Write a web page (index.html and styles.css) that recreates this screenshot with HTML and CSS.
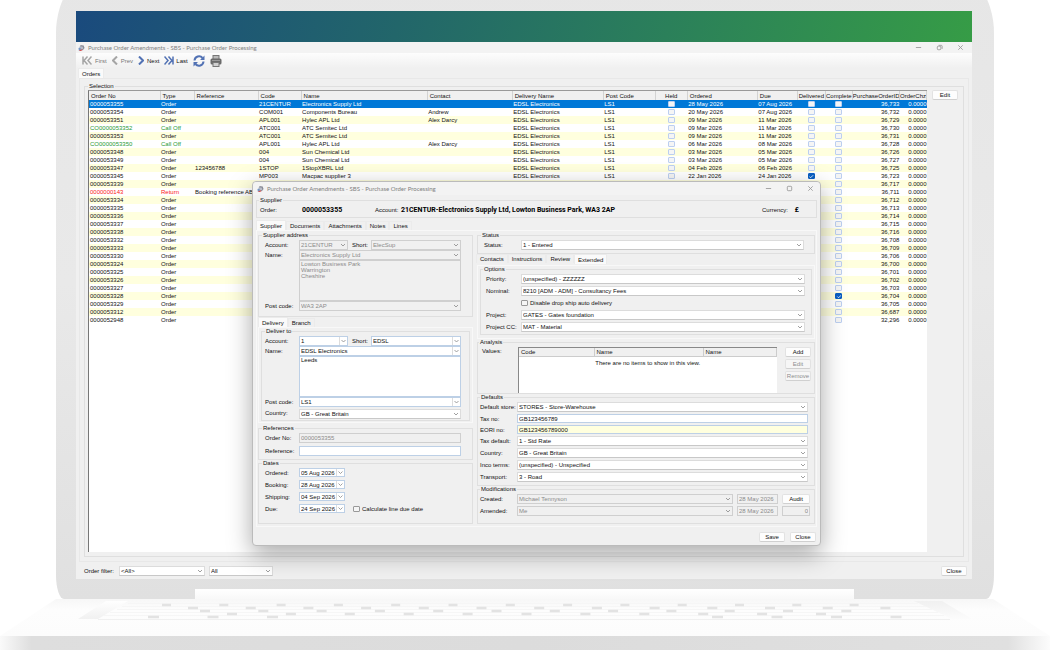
FILE: index.html
```html
<!DOCTYPE html>
<html lang="en">
<head>
    <meta charset="UTF-8">
    <meta name="viewport" content="width=device-width, initial-scale=1.0">
    <title>Purchase Order Amendments</title>
    <link rel="stylesheet" href="styles.css">
</head>
<body>
    <div class="lid">
        <div class="screen">
            <div class="banner"></div>
            <header class="titlebar">
                <svg class="app-icon" viewBox="0 0 16 16"><path d="M6 1l7 1 2 6-4 5-6-2-1-6z" fill="#8b8d98"/><path d="M5 4l6 1 1 5-5 1-3-3z" fill="#b9bdc8"/><path d="M1 8l4-1 2 5-5 2z" fill="#7294c4"/><path d="M2 14q4 2 8-1l-2-2z" fill="#d34b4b"/></svg>
                <h1>Purchase Order Amendments - SBS - Purchase Order Processing</h1>
                <div class="win-buttons">
                    <button aria-label="Minimise"><svg viewBox="0 0 8 8"><path d="M1 4h6"/></svg></button>
                    <button aria-label="Restore"><svg viewBox="0 0 8 8"><rect x="1.5" y="2.5" width="4" height="4" rx="1"/><path d="M3 1.5h3q1 0 1 1v3"/></svg></button>
                    <button aria-label="Close window"><svg viewBox="0 0 8 8"><path d="M1.5 1.5l5 5m0-5l-5 5"/></svg></button>
                </div>
            </header>
            <nav class="toolbar">
                <button class="off"><svg class="w10" viewBox="0 0 10 9"><path d="M1 .5v8M5.500 .5l-3.500 4 3.500 4M9.500 .5l-3.500 4 3.500 4"/></svg>First</button>
                <button class="off"><svg class="w6" viewBox="0 0 6 9"><path d="M5 .5l-4 4 4 4"/></svg>Prev</button>
                <button><svg class="w6" viewBox="0 0 6 9"><path d="M1 .5l4 4-4 4"/></svg>Next</button>
                <button class="last"><svg class="w10" viewBox="0 0 10 9"><path d="M9 .5v8M.5 .5l3.500 4-3.500 4M4.500 .5l3.500 4-3.500 4"/></svg>Last</button>
                <button class="tool" aria-label="Refresh"><svg viewBox="0 0 12 12"><path d="M1.500 5.500a4.500 4.500 0 0 1 8-2.500M10.500 6.500a4.500 4.500 0 0 1-8 2.500"/><path d="M11.500 .5v4.500h-4.500zM.5 11.500v-4.500h4.500z" fill="#5272b4" stroke="none"/></svg></button>
                <button class="tool" aria-label="Print"><svg viewBox="0 0 12 12"><g stroke="none"><path d="M2.500 0h7v4h-7z" fill="#777"/><path d="M3.500 1h5v3h-5z" fill="#bbb"/><rect x=".5" y="3.500" width="11" height="6" rx="1.500" fill="#6b6b6b"/><path d="M2.500 7h7v5h-7z" fill="#777"/><path d="M3.500 8h5v3h-5z" fill="#d0d0d0"/><path d="M2 5h8v1H2z" fill="#999"/></g></svg></button>
            </nav>
            <div class="main-tabs tabs"><button class="tab active">Orders</button></div>
            <main class="panel">
                <fieldset class="selection">
                    <legend>Selection</legend>
                    <div class="grid-box">
                        <table class="orders">
                            <colgroup>
                                <col style="width:71px"><col style="width:34px"><col style="width:64px"><col style="width:43px"><col style="width:126px">
                                <col style="width:85px"><col style="width:91px"><col style="width:52px"><col style="width:32px"><col style="width:70px">
                                <col style="width:40px"><col style="width:28px"><col style="width:27px"><col style="width:47px"><col style="width:27px">
                            </colgroup>
                            <thead>
                                <tr><th>Order No</th><th>Type</th><th>Reference</th><th>Code</th><th>Name</th><th>Contact</th><th>Delivery Name</th><th>Post Code</th><th class="mid">Held</th><th>Ordered</th><th>Due</th><th class="mid">Delivered</th><th class="mid">Complete</th><th class="num">PurchaseOrderID</th><th class="num">OrderChz</th></tr>
                            </thead>
                            <tbody id="rows"></tbody>
                        </table>
                    </div>
                    <button class="btn">Edit</button>
                </fieldset>
            </main>
            <footer class="filters">
                <label for="filter">Order filter:</label>
                <select id="filter" class="f-main"><option>&lt;All&gt;</option></select>
                <select class="f-sub" aria-label="Filter type"><option>All</option></select>
                <button class="btn push">Close</button>
            </footer>

            <section class="dialog">
                <header class="titlebar">
                    <svg class="app-icon" viewBox="0 0 16 16"><path d="M6 1l7 1 2 6-4 5-6-2-1-6z" fill="#8b8d98"/><path d="M5 4l6 1 1 5-5 1-3-3z" fill="#b9bdc8"/><path d="M1 8l4-1 2 5-5 2z" fill="#7294c4"/><path d="M2 14q4 2 8-1l-2-2z" fill="#d34b4b"/></svg>
                    <h2>Purchase Order Amendments - SBS - Purchase Order Processing</h2>
                    <div class="win-buttons">
                        <button aria-label="Minimise"><svg viewBox="0 0 8 8"><path d="M1 4h6"/></svg></button>
                        <button aria-label="Maximise"><svg viewBox="0 0 8 8"><rect x="1.5" y="1.5" width="5" height="5" rx="1"/></svg></button>
                        <button aria-label="Close dialog"><svg viewBox="0 0 8 8"><path d="M1.5 1.5l5 5m0-5l-5 5"/></svg></button>
                    </div>
                </header>
                <fieldset class="summary">
                    <legend>Supplier</legend>
                    <span class="s-order">Order:</span><b class="s-no">0000053355</b>
                    <span class="s-acc">Account:</span><b>21CENTUR-Electronics Supply Ltd, Lowton Business Park, WA3 2AP</b>
                    <span class="push">Currency:</span><b class="s-cur">£</b>
                </fieldset>
                <div class="tabs">
                    <button class="tab active">Supplier</button><button class="tab">Documents</button><button class="tab">Attachments</button><button class="tab">Notes</button><button class="tab">Lines</button>
                </div>
                <div class="columns">
                    <div class="left">
                        <fieldset class="form address">
                            <legend>Supplier address</legend>
                            <label for="sa">Account:</label>
                            <div class="pair">
                                <select id="sa" disabled><option>21CENTUR</option></select>
                                <label for="ss">Short:</label>
                                <select id="ss" disabled><option>ElecSup</option></select>
                            </div>
                            <label for="sn">Name:</label><select id="sn" disabled><option>Electronics Supply Ltd</option></select>
                            <span></span><textarea aria-label="Supplier address" disabled>Lowton Business Park
Warrington
Cheshire</textarea>
                            <label for="sp">Post code:</label><select id="sp" disabled><option>WA3 2AP</option></select>
                        </fieldset>
                        <div class="tabs sub"><button class="tab active">Delivery</button><button class="tab">Branch</button></div>
                        <div class="tab-body">
                            <fieldset class="form deliver">
                                <legend>Deliver to</legend>
                                <label for="da">Account:</label>
                                <div class="pair">
                                    <select id="da" class="combo"><option>1</option></select>
                                    <label for="ds">Short:</label>
                                    <select id="ds" class="combo"><option>EDSL</option></select>
                                </div>
                                <label for="dn">Name:</label><select id="dn" class="combo"><option>EDSL Electronics</option></select>
                                <span></span><textarea aria-label="Delivery address">Leeds</textarea>
                                <label for="dp">Post code:</label><select id="dp" class="combo"><option>LS1</option></select>
                                <label for="dc">Country:</label><select id="dc" class="country"><option>GB - Great Britain</option></select>
                            </fieldset>
                        </div>
                        <fieldset class="form refs">
                            <legend>References</legend>
                            <label for="ro">Order No:</label><input id="ro" type="text" value="0000053355" disabled>
                            <label for="rr">Reference:</label><input id="rr" type="text">
                        </fieldset>
                        <fieldset class="form dates">
                            <legend>Dates</legend>
                            <label for="d1">Ordered:</label><input id="d1" class="date" type="text" value="05 Aug 2026">
                            <label for="d2">Booking:</label><input id="d2" class="date" type="text" value="28 Aug 2026">
                            <label for="d3">Shipping:</label><input id="d3" class="date" type="text" value="04 Sep 2026">
                            <label for="d4">Due:</label>
                            <div class="due"><input id="d4" class="date" type="text" value="24 Sep 2026"><label class="check"><input type="checkbox">Calculate line due date</label></div>
                        </fieldset>
                    </div>
                    <div class="right">
                        <fieldset class="form status">
                            <legend>Status</legend>
                            <label for="st">Status:</label><select id="st"><option>1 - Entered</option></select>
                        </fieldset>
                        <div class="tabs sub"><button class="tab">Contacts</button><button class="tab">Instructions</button><button class="tab">Review</button><button class="tab active">Extended</button></div>
                        <div class="tab-body options-body">
                            <fieldset class="form options">
                                <legend>Options</legend>
                                <label for="op">Priority:</label><select id="op"><option>(unspecified) - ZZZZZZ</option></select>
                                <label for="on">Nominal:</label><select id="on"><option>8210 [ADM - ADM] - Consultancy Fees</option></select>
                                <span></span><label class="check"><input type="checkbox">Disable drop ship auto delivery</label>
                                <label for="oj">Project:</label><select id="oj"><option>GATES - Gates foundation</option></select>
                                <label for="oc">Project CC:</label><select id="oc"><option>MAT - Material</option></select>
                            </fieldset>
                        </div>
                        <fieldset class="analysis">
                            <legend>Analysis</legend>
                            <span class="values">Values:</span>
                            <div class="list">
                                <table>
                                    <colgroup><col style="width:75px"><col style="width:109px"><col></colgroup>
                                    <thead><tr><th>Code</th><th>Name</th><th>Name</th></tr></thead>
                                    <tbody><tr><td colspan="3">There are no items to show in this view.</td></tr></tbody>
                                </table>
                            </div>
                            <div class="actions"><button class="btn">Add</button><button class="btn" disabled>Edit</button><button class="btn" disabled>Remove</button></div>
                        </fieldset>
                        <fieldset class="form defaults">
                            <legend>Defaults</legend>
                            <label for="f1">Default store:</label><select id="f1"><option>STORES - Store-Warehouse</option></select>
                            <label for="f2">Tax no:</label><input id="f2" type="text" value="GB123456789">
                            <label for="f3">EORI no:</label><input id="f3" class="hint" type="text" value="GB123456789000">
                            <label for="f4">Tax default:</label><select id="f4"><option>1 - Std Rate</option></select>
                            <label for="f5">Country:</label><select id="f5"><option>GB - Great Britain</option></select>
                            <label for="f6">Inco terms:</label><select id="f6"><option>(unspecified) - Unspecified</option></select>
                            <label for="f7">Transport:</label><select id="f7"><option>3 - Road</option></select>
                        </fieldset>
                        <fieldset class="form mods">
                            <legend>Modifications</legend>
                            <label for="m1">Created:</label><select id="m1" disabled><option>Michael Tennyson</option></select><input type="text" aria-label="Created on" value="28 May 2026" disabled><button class="btn">Audit</button>
                            <label for="m2">Amended:</label><select id="m2" disabled><option>Me</option></select><input type="text" aria-label="Amended on" value="28 May 2026" disabled><input class="num" type="text" aria-label="Amend count" value="0" disabled>
                        </fieldset>
                    </div>
                </div>
                <footer class="dialog-foot"><button class="btn">Save</button><button class="btn">Close</button></footer>
            </section>
        </div>
        <div class="hinge"></div>
    </div>
    <svg class="keyboard" viewBox="0 0 1050 37" preserveAspectRatio="none">
        <defs>
            <linearGradient id="deck" x1="0" y1="0" x2="0" y2="1"><stop offset="0" stop-color="#f7f7f7"/><stop offset=".3" stop-color="#fdfdfd"/><stop offset="1" stop-color="#fcfcfc"/></linearGradient>
            <linearGradient id="edgeL" x1="0" y1="0" x2="1" y2="1"><stop offset="0" stop-color="#fff"/><stop offset=".5" stop-color="#f1f1f1"/><stop offset="1" stop-color="#fcfcfc"/></linearGradient>
        </defs>
        <path d="M56 0h937l57 37H0z" fill="url(#deck)"/>
        <path d="M106 2L78 20h20l30-18zM942 2l30 18h-20L914 2z" fill="url(#edgeL)"/>
        <g stroke="#f6f6f6"><path d="M128 4.500h790M122 7.500h804M117 10.500h815M110 13.500h828M104 16.500h840"/><path d="M98 20.500h852" stroke="#f0f0f0"/></g>
        <g stroke="#e3e3e3" stroke-width="2.500" fill="none">
            <path d="M162 6h700" stroke-dasharray="9 48.300"/>
            <path d="M188 9h706" stroke-dasharray="10 47.700"/>
            <path d="M200 12h652" stroke-dasharray="10 48.300"/>
            <path d="M227 15h600" stroke-dasharray="10 48.900"/>
            <path d="M148 18h140M712 18h190" stroke-dasharray="11 48.500"/>
        </g>
    </svg>
    <div class="base"></div>
    <script src="script.js"></script>
</body>
</html>
```
FILE: styles.css
```css
:root {
    --line: #dfdfdf;
    --face: #f0f0f0;
    --ui: "Liberation Sans", Arial, sans-serif;
}
* {
    box-sizing: border-box;
}
body {
    margin: 0;
    background: #fff;
    overflow: hidden;
    font: 6px/8px var(--ui);
    color: #111;
}
button, select, input, textarea {
    font: inherit;
    color: inherit;
    margin: 0;
    border-radius: 0;
    outline: none;
}
label {
    white-space: nowrap;
}
h1, h2 {
    margin: 0;
    font: 6px/8px Lato, sans-serif;
    color: #808080;
}

/* laptop */
.lid {
    height: 632px;
    margin: -33px 56px 0;
    padding: 44px 22px 0 20px;
    background: linear-gradient(#e6e6e6, #e9e9e9 50%, #e0e0e0);
    border-radius: 50px 50px 8px 8px / 66px 66px 24px 24px;
    display: flex;
    flex-direction: column;
}
.screen {
    position: relative;
    height: 568px;
    background: var(--face);
    display: flex;
    flex-direction: column;
}
.hinge {
    height: 10px;
    margin: 10px 118px 0 119px;
    background: linear-gradient(#fff, #f8f8f8);
}
.keyboard {
    display: block;
    width: 100%;
    height: 37px;
}
.base {
    height: 14px;
    background: linear-gradient(90deg, #fafafa, #dedede 3%, #dcdcdc 50%, #e0e0e0 96%, #fcfcfc);
}
.banner {
    height: 31px;
    background: linear-gradient(105deg, #1a4a7d, #22666a 36%, #2b805a 66%, #369c46);
}

/* window chrome */
.titlebar {
    height: 11px;
    padding: 0 4px 0 2px;
    background: #f3f3f3;
    display: flex;
    align-items: center;
    gap: 3px;
}
.app-icon {
    width: 7px;
    height: 8px;
}
.win-buttons {
    margin-left: auto;
    display: flex;
    gap: 6px;
}
.win-buttons button {
    width: 15px;
    height: 8px;
    padding: 0;
    border: 0;
    background: none;
    display: flex;
    justify-content: center;
    align-items: center;
}
.win-buttons svg {
    width: 7px;
    height: 7px;
    fill: none;
    stroke: #999;
}
.toolbar {
    height: 15px;
    padding: 0 6px;
    background: linear-gradient(#fdfdfd, #f0f0f0);
    display: flex;
    align-items: center;
    gap: 5px;
}
.toolbar button {
    padding: 0;
    border: 0;
    background: none;
    display: flex;
    align-items: center;
    gap: 3px;
    color: #111;
}
.toolbar svg {
    width: 12px;
    height: 12px;
    fill: none;
    stroke: #5272b4;
    stroke-width: 2;
}
.toolbar .w10 {
    width: 10px;
    height: 9px;
    stroke-width: 1.5;
}
.toolbar .w6 {
    width: 6px;
    height: 9px;
}
.toolbar .off {
    color: #777;
}
.toolbar .off svg {
    stroke: #a5a5a5;
}
.toolbar .last {
    gap: 2px;
}

/* tabs, groups, buttons */
.tabs {
    height: 10px;
    display: flex;
    align-items: end;
}
.tab {
    height: 9px;
    padding: 0 3px;
    border: 1px solid #ebebeb;
    border-bottom: 0;
    background: none;
    line-height: 8px;
}
.tab.active {
    height: 10px;
    background: #fafafa;
}
.main-tabs {
    padding-left: 2px;
}
fieldset {
    min-width: 0;
    margin: 0;
    padding: 1px 6px 3px;
    border: 1px solid var(--line);
}
legend {
    margin-left: -3px;
    padding: 0 1px;
    line-height: 7px;
}
.btn {
    width: 26px;
    height: 10px;
    padding: 0;
    border: 1px solid #e2e2e2;
    border-bottom-color: #d0d0d0;
    border-radius: 2px;
    background: #fdfdfd;
    line-height: 8px;
    text-align: center;
}
.btn:disabled {
    color: #8d8d8d;
    background: #f6f6f6;
}
.push {
    margin-left: auto;
}
.panel {
    flex: 1;
    margin: 0 3px;
    padding: 4px;
    border: 1px solid #e8e8e8;
    display: flex;
}
.selection {
    flex: 1;
    display: flex;
    align-items: start;
    gap: 5px;
    padding: 0 5px 4px 3px;
}
.selection legend {
    margin-left: 0;
}
.grid-box {
    flex: 1;
    height: 100%;
    background: #fff;
    border-top: 1px solid #999;
    border-left: 1px solid #777;
}
.orders {
    width: 100%;
    table-layout: fixed;
    border-collapse: collapse;
}
.orders th, .orders td {
    height: 8px;
    padding: 0 1px;
    line-height: 8px;
    text-align: left;
    font-weight: normal;
    white-space: nowrap;
}
.orders th {
    height: 9px;
    padding-left: 2px;
    background: var(--face);
    border-right: 1px solid #d2d2d2;
    overflow: hidden;
}
.orders tbody tr:nth-child(odd) {
    background: #ffffde;
}
.orders tbody tr.current {
    background: #0078d7;
    color: #fff;
}
.orders .green {
    color: #1f9a35;
}
.orders .red {
    color: #fb1818;
}
.orders .mid {
    padding: 0;
    text-align: center;
}
.orders .num {
    padding: 0;
    text-align: right;
}
input[type="checkbox"] {
    appearance: none;
    width: 7px;
    height: 6px;
    border: 1px solid #bccff0;
    border-radius: 1px;
    background: #f5f5f5;
}
.orders input {
    display: block;
    margin: 0 auto;
}
input[type="checkbox"]:checked {
    border-color: #0a5fc4;
    background: #0a5fc4 url("data:image/svg+xml,%3Csvg xmlns='http://www.w3.org/2000/svg' viewBox='0 0 7 6'%3E%3Cpath d='M1.5 3l1.500 1.500 3-3' fill='none' stroke='white'/%3E%3C/svg%3E") center / 6px 5px no-repeat;
}
.filters {
    height: 17px;
    margin-right: 5px;
    padding-left: 8px;
    display: flex;
    align-items: center;
}
.filters label {
    width: 35px;
}
.f-main {
    width: 86px;
    margin-right: 4px;
}
.f-sub {
    width: 64px;
}

/* fields */
select, input[type="text"], textarea {
    min-width: 0;
    height: 10px;
    padding: 0 1px;
    border: 1px solid #dcdcdc;
    background-color: #fff;
    line-height: 8px;
}
select {
    appearance: none;
    border-bottom-color: #c8c8c8;
    background: #fff url("data:image/svg+xml,%3Csvg xmlns='http://www.w3.org/2000/svg' viewBox='0 0 6 4'%3E%3Cpath d='M1 1l2 2 2-2' fill='none' stroke='%23888' stroke-width='.8'/%3E%3C/svg%3E") right 1px center / 6px 4px no-repeat;
}
input[type="text"], textarea, .combo {
    border-color: #bdd0e6;
}
.combo, .date {
    background: url("data:image/svg+xml,%3Csvg xmlns='http://www.w3.org/2000/svg' viewBox='0 0 8 10'%3E%3Cpath d='M.5 0v10' stroke='%23ddd'/%3E%3Cpath d='M2.500 4l2 2 2-2' fill='none' stroke='%23888' stroke-width='.8'/%3E%3C/svg%3E") right center / 8px 10px no-repeat #fff;
}
select:disabled, input[type="text"]:disabled, textarea:disabled {
    opacity: 1;
    color: #8b8b8b;
    border-color: #cfcfcf;
    background-color: var(--face);
}
textarea {
    height: 41px;
    resize: none;
    line-height: 6px;
    overflow: hidden;
}
input.hint {
    background: #ffffde;
}
.num {
    text-align: right;
}
.form {
    display: grid;
    grid-template-columns: 34px 1fr;
    align-items: center;
}
.check {
    display: flex;
    align-items: center;
    gap: 2px;
}
.check input {
    border-color: #999;
}

/* amendment dialog */
.dialog {
    position: absolute;
    left: 176px;
    top: 170px;
    width: 569px;
    height: 365px;
    padding: 0 3px;
    border: 1px solid #bbb;
    border-radius: 4px;
    background: var(--face);
    box-shadow: 0 8px 24px rgba(0, 0, 0, .34);
    display: flex;
    flex-direction: column;
}
.dialog .titlebar {
    height: 13px;
    margin: 0 -3px 2px;
    padding: 0 2px 0 4px;
    border-radius: 4px 4px 0 0;
}
.summary {
    height: 21px;
    padding: 2px 17px 0 3px;
    display: flex;
    align-items: center;
}
.summary legend {
    margin-left: -1px;
}
.summary b {
    font: bold 7px/8px Roboto, sans-serif;
    color: #000;
}
.s-order {
    width: 42px;
}
.s-no {
    width: 73px;
}
.s-acc {
    width: 26px;
}
.s-cur {
    width: 11px;
    text-align: right;
}
.dialog > .tabs {
    height: 12px;
}
.columns {
    flex: 1;
    padding: 1px 1px 2px;
    border: 1px solid #f8f8f8;
    display: grid;
    grid-template-columns: 215px 1fr;
    gap: 4px;
}
.left, .right {
    min-width: 0;
    display: flex;
    flex-direction: column;
}
.address {
    height: 85px;
    padding-right: 11px;
    align-content: start;
}
.pair {
    display: grid;
    grid-template-columns: 49px 1fr 90px;
    align-items: center;
}
.pair label {
    padding-left: 4px;
}
.tab-body {
    padding: 0 2px 1px;
    border: 1px solid #f8f8f8;
}
.deliver {
    padding: 1px 8px 1px 3px;
}
.deliver legend {
    margin-left: 0;
}
.country {
    margin-top: 2px;
}
.refs {
    margin-top: 2px;
    padding-right: 11px;
    row-gap: 3px;
}
.dates {
    flex: 1;
    align-content: start;
    row-gap: 3px;
}
.dates .date {
    width: 46px;
    height: 9px;
    line-height: 7px;
}
.due {
    display: flex;
    align-items: center;
    gap: 8px;
}
.status {
    height: 22px;
    padding-right: 10px;
    grid-template-columns: 37px 1fr;
    align-content: start;
}
.right .sub {
    height: 11px;
    margin-left: -1px;
    align-items: start;
}
.options-body {
    padding-bottom: 3px;
}
.options {
    grid-template-columns: 35px 1fr;
    row-gap: 2px;
    padding: 1px 6px 2px 5px;
}
.options .check {
    height: 10px;
}
.analysis {
    height: 55px;
    padding: 1px 3px 0 4px;
    display: flex;
}
.values {
    width: 36px;
}
.list {
    flex: 1;
    height: 46px;
    background: #fff;
    border-top: 1px solid #888;
    border-left: 1px solid #888;
}
.list table {
    width: 100%;
    border-collapse: collapse;
    table-layout: fixed;
}
.list th {
    height: 8px;
    padding: 0 2px;
    line-height: 8px;
    text-align: left;
    font-weight: normal;
    background: var(--face);
    border-right: 1px solid #ccc;
    border-bottom: 1px solid #ccc;
}
.list td {
    padding: 2px 0;
    text-align: center;
}
.actions {
    margin-left: 8px;
    display: flex;
    flex-direction: column;
    gap: 2px;
}
.defaults {
    grid-template-columns: 37px 1fr;
    row-gap: 2px;
    padding: 1px 6px 3px 2px;
}
.defaults input[type="text"] {
    height: 9px;
    line-height: 7px;
}
.mods {
    flex: 1;
    grid-template-columns: 37px 1fr 45px 32px;
    align-content: start;
    row-gap: 2px;
    padding: 1px 4px 0 2px;
}
.defaults legend, .mods legend {
    margin-left: 0;
}
.mods input:not(.num) {
    margin-left: 4px;
    width: 41px;
}
.mods .btn, .mods .num {
    width: 28px;
    margin-left: 4px;
}
.dialog-foot {
    height: 18px;
    padding: 2px 1px 0 0;
    display: flex;
    justify-content: end;
    align-items: center;
    gap: 5px;
}
```
FILE: script.js
```js
// no, type, reference, code, name, contact, ordered, due, id, delivered, complete
const orders = [
    ['0000053355', 'Order', '', '21CENTUR', 'Electronics Supply Ltd', '', '28 May 2026', '07 Aug 2026', '36,733'],
    ['0000053354', 'Order', '', 'COM001', 'Components Bureau', 'Andrew', '20 May 2026', '07 Aug 2026', '36,732'],
    ['0000053351', 'Order', '', 'APL001', 'Hylec APL Ltd', 'Alex Darcy', '09 Mar 2026', '11 Mar 2026', '36,729'],
    ['CO0000053352', 'Call Off', '', 'ATC001', 'ATC Semitec Ltd', '', '09 Mar 2026', '11 Mar 2026', '36,730'],
    ['0000053353', 'Order', '', 'ATC001', 'ATC Semitec Ltd', '', '09 Mar 2026', '11 Mar 2026', '36,731'],
    ['CO0000053350', 'Call Off', '', 'APL001', 'Hylec APL Ltd', 'Alex Darcy', '06 Mar 2026', '08 Mar 2026', '36,728'],
    ['0000053348', 'Order', '', '004', 'Sun Chemical Ltd', '', '03 Mar 2026', '05 Mar 2026', '36,726'],
    ['0000053349', 'Order', '', '004', 'Sun Chemical Ltd', '', '03 Mar 2026', '05 Mar 2026', '36,727'],
    ['0000053347', 'Order', '123456788', '1STOP', '1StopXBRL Ltd', '', '04 Feb 2026', '06 Feb 2026', '36,725'],
    ['0000053345', 'Order', '', 'MP003', 'Macpac supplier 3', '', '22 Jan 2026', '24 Jan 2026', '36,723', true],
    ['0000053339', 'Order', '', '', '', '', '', '', '36,717'],
    ['0000000143', 'Return', 'Booking reference ABC', '', '', '', '', '', '36,711'],
    ['0000053334', 'Order', '', '', '', '', '', '', '36,712'],
    ['0000053335', 'Order', '', '', '', '', '', '', '36,713'],
    ['0000053336', 'Order', '', '', '', '', '', '', '36,714'],
    ['0000053337', 'Order', '', '', '', '', '', '', '36,715'],
    ['0000053338', 'Order', '', '', '', '', '', '', '36,716'],
    ['0000053332', 'Order', '', '', '', '', '', '', '36,708'],
    ['0000053333', 'Order', '', '', '', '', '', '', '36,709'],
    ['0000053330', 'Order', '', '', '', '', '', '', '36,706'],
    ['0000053324', 'Order', '', '', '', '', '', '', '36,700'],
    ['0000053325', 'Order', '', '', '', '', '', '', '36,701'],
    ['0000053326', 'Order', '', '', '', '', '', '', '36,702'],
    ['0000053327', 'Order', '', '', '', '', '', '', '36,703'],
    ['0000053328', 'Order', '', '', '', '', '', '', '36,704', false, true],
    ['0000053329', 'Order', '', '', '', '', '', '', '36,705'],
    ['0000053312', 'Order', '', '', '', '', '', '', '36,687'],
    ['0000052948', 'Order', '', '', '', '', '', '', '32,296']
];

const colours = { 'Call Off': 'green', 'Return': 'red' };

function box(name, no, on) {
    return `<td class="mid"><input type="checkbox" aria-label="${name} ${no}"${on ? ' checked' : ''}></td>`;
}

document.getElementById('rows').innerHTML = orders.map((o, i) => {
    const [no, type, ref, code, name, contact, ordered, due, id, delivered, complete] = o;
    const c = colours[type] || '';
    const site = code ? 'EDSL Electronics' : '';
    return `<tr class="${i === 0 ? 'current' : ''}">
        <td class="${c}">${no}</td><td class="${c}">${type}</td><td>${ref}</td><td>${code}</td><td>${name}</td><td>${contact}</td>
        <td>${site}</td><td>${code ? 'LS1' : ''}</td>${box('Held', no, false)}<td>${ordered}</td><td>${due}</td>
        ${box('Delivered', no, delivered)}${box('Complete', no, complete)}<td class="num">${id}</td><td class="num">0.0000</td>
    </tr>`;
}).join('');
```
